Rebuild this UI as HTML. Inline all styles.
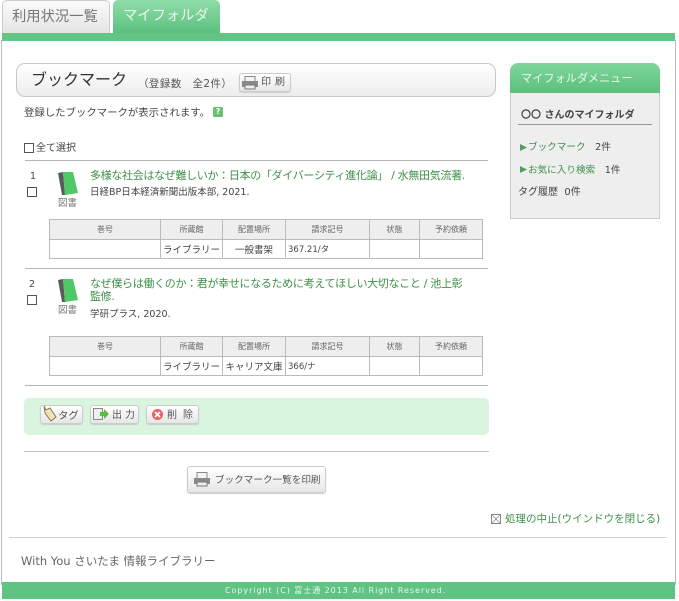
<!DOCTYPE html>
<html lang="ja"><head><meta charset="utf-8"><title>ブックマーク</title>
<style>
html,body{margin:0;padding:0;background:#fff}
#p{position:relative;width:679px;height:601px;overflow:hidden;background:#fff;font-family:"DejaVu Sans","Noto Sans CJK JP",sans-serif;color:#444;font-size:10px;filter:blur(.3px)}
#p div{position:absolute;white-space:nowrap;box-sizing:border-box}
.t{line-height:14px}
.g{color:#3f8f4a}
.hr{height:1px;background:#b5b5b5}
.cb{width:10px;height:10px;border:1px solid #555;background:#fff}
.btn{border:1px solid #ccc;border-radius:3px;background:linear-gradient(#fff,#e6e6e6);box-shadow:0 1px 1px #ccc}
table{position:absolute;border-collapse:collapse;table-layout:fixed;width:434px;left:49px;font-size:8.5px;color:#555}
td{border:1px solid #bbb;text-align:center;padding:0;overflow:hidden;white-space:nowrap}
tr.h td{background:#eee;font-size:8px;color:#666}
tr.b td{font-size:9.5px;color:#444}
svg{position:absolute}
</style></head><body><div id="p">
<div style="left:1px;top:40px;width:1px;height:545px;background:#bbb"></div>
<div style="left:675px;top:40px;width:1px;height:545px;background:#bbb"></div>

<div style="left:2px;top:0;width:108px;height:33px;background:linear-gradient(#fafafa,#e4e4e4);border:1px solid #ccc;border-bottom:0;border-radius:5px 5px 0 0"></div>
<div class="t" style="left:12px;top:9px;font-size:14.3px;line-height:16px;color:#777">利用状況一覧</div>
<div style="left:113px;top:0;width:107px;height:33px;background:linear-gradient(#8fdca6,#5cc07f);border-radius:5px 5px 0 0"></div>
<div class="t" style="left:123px;top:8px;font-size:14.3px;line-height:16px;color:#e8f8ec">マイフォルダ</div>
<div style="left:2px;top:33px;width:673px;height:8px;background:#62c585"></div>

<div style="left:16px;top:63px;width:480px;height:34px;border:1px solid #c8c8c8;border-radius:9px;background:linear-gradient(#fff,#ececec)"></div>
<div class="t" style="left:31px;top:71px;font-size:16px;line-height:18px;color:#333">ブックマーク</div>
<div class="t" style="left:138px;top:77px;font-size:10.5px;letter-spacing:.4px;color:#555">（登録数　全2件）</div>
<div class="btn" style="left:239px;top:73px;width:52px;height:19px"></div>
<svg style="left:241px;top:76px" width="18" height="14" viewBox="0 0 18 14"><rect x="4" y="0.5" width="10" height="5" fill="#f4f4f4" stroke="#888"/><rect x="1" y="5" width="16" height="6" fill="#8a8a8a"/><rect x="4" y="9" width="10" height="4" fill="#eee" stroke="#777"/></svg>
<div class="t" style="left:261px;top:76px;font-size:10px;letter-spacing:4px;color:#555">印刷</div>

<div class="t" style="left:24px;top:106px;font-size:10.4px;color:#444">登録したブックマークが表示されます。</div>
<div style="left:213px;top:107px;width:10px;height:10px;background:#6cc070;color:#fff;font-size:8px;line-height:10px;text-align:center;font-weight:bold;border-radius:1px">?</div>

<div class="cb" style="left:24px;top:143px"></div>
<div class="t" style="left:36px;top:142px;font-size:10px">全て選択</div>
<div class="hr" style="left:25px;top:160px;width:463px"></div>

<div class="t" style="left:30px;top:170px;font-size:9.5px">1</div>
<div class="cb" style="left:27px;top:187px"></div>
<svg style="left:57px;top:171px" width="22" height="26" viewBox="0 0 22 26"><path d="M1 2 6 1 8 24 5 24Z" fill="#5a5a5a"/><path d="M6 1 16 1 21 22 8 24Z" fill="#4fc866"/></svg>
<div class="t" style="left:58px;top:197px;font-size:9.5px;color:#777">図書</div>
<div class="t g" style="left:90px;top:169px;font-size:11px;letter-spacing:-.32px">多様な社会はなぜ難しいか：日本の「ダイバーシティ進化論」 / 水無田気流著.</div>
<div class="t" style="left:90px;top:186px;font-size:9.5px">日経BP日本経済新聞出版本部, 2021.</div>

<table style="top:219px"><colgroup><col style="width:111px"><col style="width:62px"><col style="width:63px"><col style="width:84px"><col style="width:50px"><col style="width:63px"></colgroup>
<tr class="h" style="height:20px"><td>巻号</td><td>所蔵館</td><td>配置場所</td><td>請求記号</td><td>状態</td><td>予約依頼</td></tr>
<tr class="b" style="height:19px"><td></td><td>ライブラリー</td><td>一般書架</td><td style="text-align:left;padding-left:2px;font-size:8.5px">367.21/タ</td><td></td><td></td></tr></table>

<div class="hr" style="left:25px;top:268px;width:463px"></div>

<div class="t" style="left:29px;top:278px;font-size:9.5px">2</div>
<div class="cb" style="left:27px;top:295px"></div>
<svg style="left:57px;top:278px" width="22" height="26" viewBox="0 0 22 26"><path d="M1 2 6 1 8 24 5 24Z" fill="#5a5a5a"/><path d="M6 1 16 1 21 22 8 24Z" fill="#4fc866"/></svg>
<div class="t" style="left:58px;top:304px;font-size:9.5px;color:#777">図書</div>
<div class="t g" style="left:90px;top:277px;font-size:11px;letter-spacing:-.32px">なぜ僕らは働くのか：君が幸せになるために考えてほしい大切なこと / 池上彰</div>
<div class="t g" style="left:90px;top:290px;font-size:11px;letter-spacing:-.32px">監修.</div>
<div class="t" style="left:90px;top:308px;font-size:9.5px">学研プラス, 2020.</div>

<table style="top:336px"><colgroup><col style="width:111px"><col style="width:62px"><col style="width:63px"><col style="width:84px"><col style="width:50px"><col style="width:63px"></colgroup>
<tr class="h" style="height:20px"><td>巻号</td><td>所蔵館</td><td>配置場所</td><td>請求記号</td><td>状態</td><td>予約依頼</td></tr>
<tr class="b" style="height:19px"><td></td><td>ライブラリー</td><td>キャリア文庫</td><td style="text-align:left;padding-left:2px;font-size:8.5px">366/ナ</td><td></td><td></td></tr></table>

<div class="hr" style="left:25px;top:385px;width:463px"></div>

<div style="left:24px;top:398px;width:465px;height:37px;background:#d9f5e0;border-radius:5px"></div>
<div class="btn" style="left:40px;top:405px;width:43px;height:19px"></div>
<svg style="left:42px;top:405px" width="16" height="18" viewBox="0 0 16 18"><path d="M2 1 4 5 8 3 14 12 9 16 3 8Z" fill="#efe2b8" stroke="#8a7a50"/></svg>
<div class="t" style="left:58px;top:409px;font-size:10.4px;color:#555">タグ</div>
<div class="btn" style="left:90px;top:405px;width:49px;height:19px"></div>
<svg style="left:93px;top:407px" width="18" height="14" viewBox="0 0 18 14"><rect x="0.5" y="1.5" width="9" height="11" fill="#eee" stroke="#888"/><path d="M7 5h4V2l5 5-5 5V9H7Z" fill="#5cb848"/></svg>
<div class="t" style="left:112px;top:409px;font-size:10px;letter-spacing:3px;color:#555">出力</div>
<div class="btn" style="left:146px;top:405px;width:53px;height:19px"></div>
<svg style="left:151px;top:408px" width="13" height="13" viewBox="0 0 13 13"><circle cx="6.5" cy="6.5" r="5.5" fill="#e8646c"/><path d="M4 4 9 9M9 4 4 9" stroke="#fff" stroke-width="1.6"/></svg>
<div class="t" style="left:167px;top:409px;font-size:10px;letter-spacing:6px;color:#555">削除</div>

<div class="hr" style="left:24px;top:451px;width:465px;background:#c4c4c4"></div>

<div class="btn" style="left:187px;top:466px;width:139px;height:27px"></div>
<svg style="left:193px;top:472px" width="18" height="15" viewBox="0 0 18 15"><rect x="4" y="0.5" width="10" height="6" fill="#f4f4f4" stroke="#888"/><rect x="1" y="6" width="16" height="6" fill="#8a8a8a"/><rect x="4" y="10" width="10" height="4" fill="#eee" stroke="#777"/></svg>
<div class="t" style="left:215px;top:474px;font-size:9.6px;color:#555">ブックマーク一覧を印刷</div>

<svg style="left:491px;top:514px" width="10" height="10" viewBox="0 0 10 10"><rect x=".5" y=".5" width="9" height="9" fill="none" stroke="#888"/><path d="M1 1 9 9M9 1 1 9" stroke="#888" stroke-width=".8"/></svg>
<div class="t g" style="left:505px;top:512px;font-size:10.5px">処理の中止(ウインドウを閉じる)</div>

<div style="left:9px;top:537px;width:658px;height:1px;background:#d2d2d2"></div>
<div class="t" style="left:21px;top:554px;font-size:11.5px;color:#666">With You さいたま 情報ライブラリー</div>
<div style="left:2px;top:582px;width:673px;height:17px;background:#5fc383"></div>
<div class="t" style="left:225px;top:584px;font-size:8px;letter-spacing:.95px;color:#e6f7ea">Copyright (C) 富士通 2013 All Right Reserved.</div>

<div style="left:510px;top:93px;width:150px;height:126px;background:#eee;border:1px solid #ccc;border-top:0"></div>
<div style="left:510px;top:63px;width:150px;height:30px;background:linear-gradient(#7ed69a,#5cc07f);border-radius:8px 8px 0 0"></div>
<div class="t" style="left:521px;top:72px;font-size:11.2px;color:#e8f8ec">マイフォルダメニュー</div>
<div class="t" style="left:521px;top:109px;font-size:10px;font-weight:bold;color:#444">〇〇 さんのマイフォルダ</div>
<div style="left:518px;top:124px;width:134px;height:1px;background:#999"></div>
<svg style="left:520px;top:144px" width="7" height="7" viewBox="0 0 7 7"><path d="M0 0 7 3.5 0 7Z" fill="#4f9f60"/></svg>
<div class="t" style="left:528px;top:141px;font-size:9.6px"><span class="g">ブックマーク</span>　2件</div>
<svg style="left:520px;top:166px" width="7" height="7" viewBox="0 0 7 7"><path d="M0 0 7 3.5 0 7Z" fill="#4f9f60"/></svg>
<div class="t" style="left:528px;top:164px;font-size:9.6px"><span class="g">お気に入り検索</span>　1件</div>
<div class="t" style="left:518px;top:186px;font-size:10px">タグ履歴&nbsp; 0件</div>
</div></body></html>
